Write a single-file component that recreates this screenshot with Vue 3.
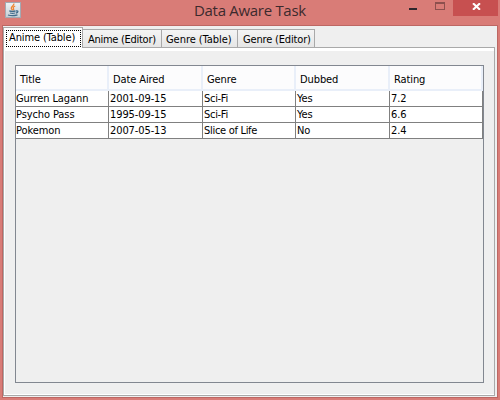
<script setup>
const tabs = [
  { label: 'Anime (Table)', cls: 't1' },
  { label: 'Anime (Editor)', cls: 't2' },
  { label: 'Genre (Table)', cls: 't3' },
  { label: 'Genre (Editor)', cls: 't4' },
]
const columns = ['Title', 'Date Aired', 'Genre', 'Dubbed', 'Rating']
const rows = [
  ['Gurren Lagann', '2001-09-15', 'Sci-Fi', 'Yes', '7.2'],
  ['Psycho Pass', '1995-09-15', 'Sci-Fi', 'Yes', '6.6'],
  ['Pokemon', '2007-05-13', 'Slice of Life', 'No', '2.4'],
]
</script>

<template>
  <div class="window">
    <header class="titlebar">
      <svg class="java" width="16" height="16" viewBox="0 0 16 16">
        <defs>
          <linearGradient id="tile" x2="0" y2="1">
            <stop offset="0" stop-color="#eef2f5" />
            <stop offset="1" stop-color="#c3ced6" />
          </linearGradient>
        </defs>
        <rect x=".5" y=".5" width="15" height="15" fill="url(#tile)" stroke="#a3a9b2" />
        <path d="M8.8 1.5C9.6 3.5 6 4.1 6.3 6.1Q6.4 7 7.7 8.2M10.2 4C8.4 4.7 7.8 5.5 8.5 6.5Q9 7.2 8.3 8.2" fill="none" stroke="#ef8430" stroke-width="1.3" />
        <path d="M4.3 8.9Q7 9.9 10.5 9M5 11Q7.5 11.9 10 11M3 13Q7.5 14.4 12.5 12.8M11 9Q13.8 8.5 12.5 10.4L10.8 11.2" fill="none" stroke="#426d8c" stroke-width="1.3" />
      </svg>
      <h1>Data Aware Task</h1>
      <div class="controls">
        <span class="min"></span>
        <span class="max"></span>
        <span class="close">
          <svg width="9" height="7" viewBox="0 0 9 7"><path d="M1 .2L8 6.8M8 .2L1 6.8" stroke="#fff" stroke-width="2" /></svg>
        </span>
      </div>
    </header>
    <main class="client">
      <nav class="tabs">
        <div v-for="(t, i) in tabs" :key="t.label" class="tab" :class="[t.cls, { active: i === 0 }]">
          <span>{{ t.label }}</span>
        </div>
      </nav>
      <section class="pane">
        <div class="scroll">
          <div class="row head">
            <div v-for="c in columns" :key="c" class="cell"><span>{{ c }}</span></div>
          </div>
          <div v-for="r in rows" :key="r[0]" class="row body">
            <div v-for="(v, i) in r" :key="i" class="cell"><span>{{ v }}</span></div>
          </div>
        </div>
      </section>
    </main>
  </div>
</template>

<style>
body { margin: 0; overflow: hidden; }
</style>

<style scoped>
* { box-sizing: border-box; }
.window {
  width: 500px; height: 400px; background: #d97c77; padding: 0 2px 2px;
  display: flex; flex-direction: column;
  font: 11px/13px Tahoma, "DejaVu Sans Condensed", "DejaVu Sans", sans-serif; color: #000;
}
.titlebar { height: 25px; flex: none; display: flex; align-items: flex-start; }
.java { margin: 2px 0 0 3px; flex: none; }
h1 {
  margin: 0 0 0 173px; width: 140px; font: 400 15px/21px "Segoe UI", "Open Sans", sans-serif;
  letter-spacing: -.3px; color: #3c2a2d; white-space: nowrap;
}
.controls { margin-left: auto; display: flex; align-items: flex-start; }
.min { width: 8px; height: 2px; background: #2e272c; margin-top: 8px; }
.max { width: 10px; height: 8px; border: 1px solid #8d504e; border-top-width: 2px; margin: 2px 8px 0 18px; }
.close { width: 45px; height: 16px; background: #c75050; display: flex; justify-content: center; padding: 3px 0 0 1px; }
.client {
  flex: 1; border: 1px solid #bd6763; background: #efefef; padding: 1px 2px 1px 0;
  display: flex; flex-direction: column;
}
.tabs { display: flex; align-items: flex-end; height: 21px; flex: none; }
.tabs::after { content: ""; flex: 1; border-bottom: 1px solid #a9a9a9; }
.tab {
  height: 19px; border: 1px solid #a9a9a9; margin-left: -1px; flex: none;
  background: linear-gradient(#f4f4f4, #e6e6e6); padding: 3px 0 0 4px; white-space: nowrap;
  letter-spacing: -.2px;
}
.t1 { width: 80px; }
.t2 { width: 80px; padding-left: 5px; letter-spacing: -.28px; }
.t3 { width: 77px; letter-spacing: -.05px; }
.t4 { width: 78px; padding-left: 5px; letter-spacing: -.17px; }
.tab.active {
  height: 21px; margin-left: 0; background: #fff; border-bottom: 0; padding: 2px 2px 0;
  letter-spacing: -.13px;
}
.active span { display: block; width: 75px; height: 17px; border: 1px dotted #000; padding: 0 0 0 2px; }
.pane {
  flex: 1; border: 1px solid #a9a9a9; border-top: 0; padding: 17px 11px 12px; display: flex;
  box-shadow: inset 1px 3px #fff, inset 0 -1px #fff;
}
.scroll { flex: 1; border: 1px solid #828790; }
.row { display: grid; grid-template-columns: 93px 94px 93px 94px 93px; background: #fff; }
.cell { white-space: nowrap; }
.head { height: 25px; background: #fcfcfd; border-bottom: 2px solid #e9eff9; }
.head .cell { border-right: 2px solid #e9eff9; padding: 7px 0 0 4px; letter-spacing: -.1px; }
.body { height: 16px; }
.body .cell { border-right: 1px solid #808080; border-bottom: 1px solid #808080; padding: 1px 0 0 1px; letter-spacing: -.1px; }
.body .cell:first-child { padding-left: 0; }
.body .cell:nth-child(3) { letter-spacing: -.3px; }
</style>
